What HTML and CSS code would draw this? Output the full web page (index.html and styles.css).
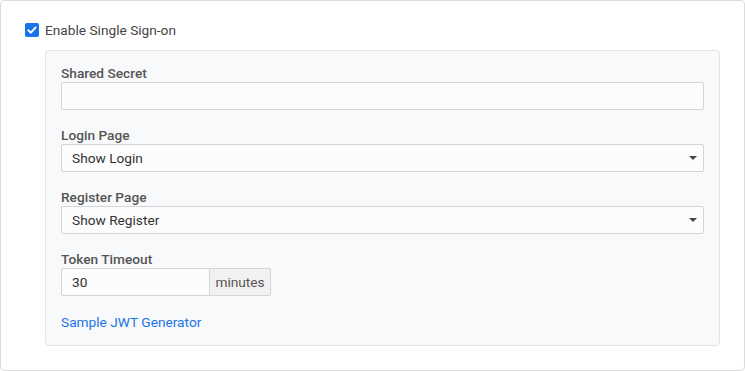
FILE: index.html
```html
<!DOCTYPE html>
<html>
<head>
<meta charset="utf-8">
<link rel="stylesheet" href="styles.css">
</head>
<body>
<div class="card">
  <label class="check-row">
    <span class="checkbox">
      <svg width="14" height="14" viewBox="0 0 14 14"><path d="M3.3 7.2 L5.9 9.7 L10.7 4.4" fill="none" stroke="#fff" stroke-width="1.9" stroke-linecap="round" stroke-linejoin="round"/></svg>
    </span>
    <span class="check-label">Enable Single Sign-on</span>
  </label>
  <div class="panel">
    <div class="group">
      <div class="label">Shared Secret</div>
      <div class="input"></div>
    </div>
    <div class="group">
      <div class="label">Login Page</div>
      <div class="input select"><span>Show Login</span><span class="caret"></span></div>
    </div>
    <div class="group">
      <div class="label">Register Page</div>
      <div class="input select"><span>Show Register</span><span class="caret"></span></div>
    </div>
    <div class="group">
      <div class="label">Token Timeout</div>
      <div class="input-group">
        <div class="input short">30</div>
        <div class="addon">minutes</div>
      </div>
    </div>
    <a class="link" href="#">Sample JWT Generator</a>
  </div>
</div>
</body>
</html>
```
FILE: styles.css
```css
* { box-sizing: border-box; }
html, body { margin: 0; padding: 0; background: #fff; }
body {
  font-family: Roboto, "Liberation Sans", sans-serif;
  font-size: 13.7px;
  color: #333;
}
.card {
  width: 745px;
  height: 371px;
  border: 1px solid #dcdcdc;
  border-radius: 4px;
  padding: 20px 24px 24px 24px;
}
.check-row {
  display: flex;
  align-items: center;
  height: 18px;
  margin-bottom: 11px;
}
.checkbox {
  width: 14px;
  height: 14px;
  border-radius: 2px;
  background: #1a73e8;
  display: flex;
  margin-right: 6px;
}
.check-label { color: #444; }
.panel {
  margin-left: 20px;
  background: #f8f9fa;
  border: 1px solid #e3e4e6;
  border-radius: 4px;
  padding: 15px 15px 14px 15px;
  height: 296px;
}
.group { margin-bottom: 18px; }
.label {
  height: 16px;
  line-height: 14px;
  font-weight: 500;
  color: #555;
}
.input {
  height: 28px;
  border: 1px solid #d5d5d5;
  border-radius: 2px;
  background: #fcfcfc;
  padding: 0 10px;
  display: flex;
  align-items: center;
  color: #333;
}
.select { justify-content: space-between; padding-right: 6px; }
.caret {
  width: 0; height: 0;
  border-left: 4px solid transparent;
  border-right: 4px solid transparent;
  border-top: 4px solid #444;
}
.input-group { display: flex; }
.short { width: 149px; border-radius: 2px 0 0 2px; }
.addon {
  height: 28px;
  width: 61px;
  border: 1px solid #d5d5d5;
  border-left: none;
  border-radius: 0 2px 2px 0;
  background: #f1f1f1;
  color: #555;
  display: flex;
  align-items: center;
  justify-content: center;
}
.link {
  display: block;
  color: #1a73e8;
  text-decoration: none;
  line-height: 16px;
  margin-top: 1px;
}
```
